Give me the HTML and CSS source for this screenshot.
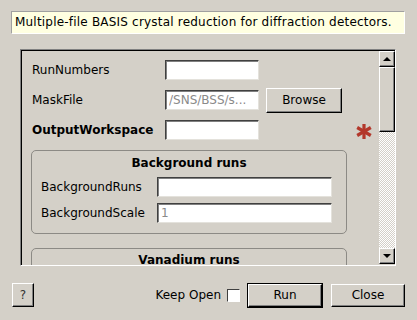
FILE: index.html
```html
<!DOCTYPE html>
<html lang="en">
<head>
    <meta charset="UTF-8">
    <title>BASIS Crystal Diffraction</title>
    <link rel="stylesheet" href="styles.css">
</head>
<body>
    <div class="dialog">
        <div class="description">Multiple-file BASIS crystal reduction for diffraction detectors.</div>

        <div class="scroll-area">
            <div class="viewport">
                <div class="prop-row">
                    <span class="prop-label">RunNumbers</span>
                    <input class="field" type="text">
                </div>
                <div class="prop-row">
                    <span class="prop-label">MaskFile</span>
                    <input class="field muted" type="text" value="/SNS/BSS/s...">
                    <button class="button browse">Browse</button>
                </div>
                <div class="prop-row">
                    <span class="prop-label bold">OutputWorkspace</span>
                    <input class="field" type="text">
                    <svg class="required" width="16" height="15" viewBox="0 0 16 15">
                        <g stroke="#b3372b" stroke-width="3.2">
                            <line x1="8" y1="0" x2="8" y2="15"/>
                            <line x1="1.2" y1="3.5" x2="14.8" y2="11.5"/>
                            <line x1="1.2" y1="11.5" x2="14.8" y2="3.5"/>
                        </g>
                    </svg>
                </div>

                <div class="group">
                    <div class="group-title">Background runs</div>
                    <div class="group-row">
                        <span class="group-label">BackgroundRuns</span>
                        <input class="field wide" type="text">
                    </div>
                    <div class="group-row">
                        <span class="group-label">BackgroundScale</span>
                        <input class="field wide muted" type="text" value="1">
                    </div>
                </div>

                <div class="group clipped">
                    <div class="group-title">Vanadium runs</div>
                </div>
            </div>

            <div class="scrollbar">
                <div class="arrow up"></div>
                <div class="thumb"></div>
                <div class="track"></div>
                <div class="arrow down"></div>
            </div>
        </div>

        <div class="footer">
            <button class="button help">?</button>
            <label class="keep-open">
                Keep Open
                <span class="checkbox"></span>
            </label>
            <button class="button default">Run</button>
            <button class="button">Close</button>
        </div>
    </div>
</body>
</html>
```

FILE: styles.css
```css
body {
    margin: 0;
    background-color: #d4d0c8;
    font-family: "DejaVu Sans", sans-serif;
    font-size: 12px;
    color: #000;
    width: 417px;
    height: 320px;
    overflow: hidden;
}

.dialog {
    padding: 11px 0 0 11px;
}

/* tooltip-like description */
.description {
    box-sizing: border-box;
    width: 394px;
    height: 23px;
    padding-left: 3px;
    line-height: 21px;
    letter-spacing: 0.2px;
    background-color: #ffffe1;
    border-top: 1px solid #a0a0a0;
    border-left: 1px solid #a0a0a0;
    border-right: 1px solid #ffffff;
    border-bottom: 1px solid #ffffff;
    white-space: nowrap;
}

/* sunken scroll frame */
.scroll-area {
    box-sizing: border-box;
    display: flex;
    width: 376px;
    height: 217px;
    margin: 15px 0 0 9px;
    border-top: 1px solid #808080;
    border-left: 1px solid #808080;
    border-right: 1px solid #ffffff;
    border-bottom: 1px solid #ffffff;
    box-shadow: inset 1px 1px #000;
    padding: 1px 0 0 1px;
}

.viewport {
    flex: 1;
    overflow: hidden;
    padding: 9px 0 0 9px;
}

.prop-row {
    display: flex;
    align-items: center;
    height: 20px;
    margin-bottom: 10px;
    padding-left: 1px;
}

.prop-label {
    width: 133px;
    white-space: nowrap;
}

.bold {
    font-weight: bold;
}

.field {
    box-sizing: border-box;
    width: 94px;
    height: 20px;
    margin: 0;
    padding: 0 3px;
    font-family: "DejaVu Sans", sans-serif;
    font-size: 12px;
    background-color: #ffffff;
    border-top: 1px solid #404040;
    border-left: 1px solid #404040;
    border-right: 1px solid #e4e2dc;
    border-bottom: 1px solid #e4e2dc;
    box-shadow: inset 1px 1px #808080;
    outline: none;
}

.field.muted {
    color: #8a8a8a;
}

.field.wide {
    width: 175px;
}

.button {
    box-sizing: border-box;
    width: 74px;
    height: 23px;
    margin: 0;
    padding: 0;
    font-family: "DejaVu Sans", sans-serif;
    font-size: 12px;
    color: #000;
    background-color: #d4d0c8;
    border-top: 1px solid #ffffff;
    border-left: 1px solid #ffffff;
    border-right: 1px solid #000;
    border-bottom: 1px solid #000;
    box-shadow: inset -1px -1px #808080;
}

.browse {
    width: 76px;
    height: 25px;
    margin: 0 0 0 7px;
}

.required {
    margin-left: 97px;
    margin-top: 2px;
}

.group {
    box-sizing: border-box;
    width: 316px;
    margin: 1px 0 14px 0;
    padding: 4px 0 10px 9px;
    border: 1px solid #8c8a85;
    border-radius: 5px;
}

.group.clipped {
    height: 60px;
    padding-top: 3px;
}

.group-title {
    font-weight: bold;
    text-align: center;
    line-height: 17px;
    margin: 0 0 5px -9px;
}

.group-row {
    display: flex;
    align-items: center;
    height: 20px;
    margin-bottom: 6px;
}

.group-row:last-child {
    margin-bottom: 0;
}

.group-label {
    width: 116px;
    white-space: nowrap;
}

/* classic scrollbar */
.scrollbar {
    width: 16px;
    display: flex;
    flex-direction: column;
    margin-bottom: 1px;
}

.arrow {
    box-sizing: border-box;
    height: 16px;
    background-color: #d4d0c8;
    border-top: 1px solid #ffffff;
    border-left: 1px solid #ffffff;
    border-right: 1px solid #000;
    border-bottom: 1px solid #000;
    box-shadow: inset -1px -1px #808080;
    display: flex;
    align-items: center;
    justify-content: center;
}

.arrow::after {
    content: "";
    border-left: 4px solid transparent;
    border-right: 4px solid transparent;
}

.arrow.up::after {
    border-bottom: 4px solid #000;
}

.arrow.down::after {
    border-top: 4px solid #000;
}

.thumb {
    box-sizing: border-box;
    height: 65px;
    background-color: #d4d0c8;
    border-top: 1px solid #ffffff;
    border-left: 1px solid #ffffff;
    border-right: 1px solid #000;
    border-bottom: 1px solid #000;
    box-shadow: inset -1px -1px #808080;
}

.track {
    flex: 1;
    background: repeating-conic-gradient(#ffffff 0 25%, #d4d0c8 0 50%) 0 0 / 2px 2px;
}

.footer {
    display: flex;
    align-items: center;
    margin-top: 17px;
    padding-left: 1px;
    width: 393px;
}

.help {
    width: 22px;
    height: 24px;
    color: #333;
}

.keep-open {
    display: flex;
    align-items: center;
    margin-left: auto;
    gap: 6px;
}

.checkbox {
    box-sizing: border-box;
    width: 13px;
    height: 13px;
    background-color: #ffffff;
    border-top: 1px solid #404040;
    border-left: 1px solid #404040;
    border-right: 1px solid #ffffff;
    border-bottom: 1px solid #ffffff;
}

.default {
    outline: 1px solid #000;
    outline-offset: 0;
}

.footer .button + .button {
    margin-left: 9px;
}

.footer .default {
    margin-left: 8px;
}
```
